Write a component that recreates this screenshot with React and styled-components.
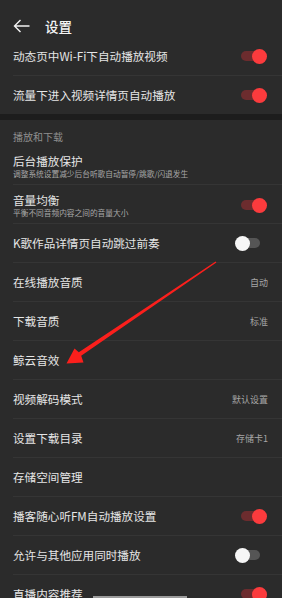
import React from 'react'
import styled, { createGlobalStyle } from 'styled-components'

const GlobalStyle = createGlobalStyle`
  html, body {
    margin: 0;
    padding: 0;
    background: #2b2b2b;
    overflow: hidden;
  }
  body {
    font-family: "Noto Sans CJK SC", "Noto Sans", sans-serif;
  }
`

const TOP = [
  { title: '动态页中Wi-Fi下自动播放视频', toggle: true },
  { title: '流量下进入视频详情页自动播放', toggle: true },
]

const PLAY = [
  { title: '后台播放保护', sub: '调整系统设置减少后台听歌自动暂停/跳歌/闪退发生' },
  { title: '音量均衡', sub: '平衡不同音频内容之间的音量大小', toggle: true },
  { title: 'K歌作品详情页自动跳过前奏', toggle: false },
  { title: '在线播放音质', value: '自动' },
  { title: '下载音质', value: '标准' },
  { title: '鲸云音效' },
  { title: '视频解码模式', value: '默认设置' },
  { title: '设置下载目录', value: '存储卡1' },
  { title: '存储空间管理' },
  { title: '播客随心听FM自动播放设置', toggle: true },
  { title: '允许与其他应用同时播放', toggle: false },
  { title: '直播内容推荐', toggle: true },
]

const Switch = ({ on }) => (
  <Track $on={on}>
    <Knob $on={on} />
  </Track>
)

const SettingRow = ({ item }) => (
  <Row $hasSub={!!item.sub}>
    <Texts>
      <Title>{item.title}</Title>
      {item.sub && <Sub>{item.sub}</Sub>}
    </Texts>
    {item.value && <Value>{item.value}</Value>}
    {item.toggle !== undefined && <Switch on={item.toggle} />}
  </Row>
)

const Group = ({ items }) => (
  <>
    {items.map((it, i) => (
      <React.Fragment key={it.title}>
        {i > 0 && <Divider />}
        <SettingRow item={it} />
      </React.Fragment>
    ))}
  </>
)

const App = () => (
  <Page>
    <GlobalStyle />
    <Header>
      <svg width="18" height="14" viewBox="0 0 18 14">
        <path d="M16.5 7H1.5M7.5 1L1.5 7L7.5 13" fill="none" stroke="#f2f2f2" strokeWidth="1.4" />
      </svg>
      <HeaderTitle>设置</HeaderTitle>
    </Header>
    <Group items={TOP} />
    <Band />
    <SectionTitle>播放和下载</SectionTitle>
    <Group items={PLAY} />
    <Arrow viewBox="0 0 282 598" width="282" height="598">
      <polygon
        points="215.6,261.4 78.8,352.2 74.5,348.5 66.5,363.5 83.5,362.5 81.2,355.8 216.4,262.6"
        fill="#fb1f1c"
      />
    </Arrow>
    <HomeBar />
  </Page>
)

const Page = styled.div`
  position: relative;
  width: 282px;
  height: 598px;
  overflow: hidden;
  background: #2b2b2b;
  color: #e6e6e6;
`
const Header = styled.div`
  display: flex;
  align-items: center;
  height: 37px;
  padding: 14px 0 0 13px;
  box-sizing: border-box;
  gap: 14px;
`
const HeaderTitle = styled.div`
  font-size: 13.5px;
  font-weight: 500;
  color: #f4f4f4;
  line-height: 20px;
`
const Row = styled.div`
  display: flex;
  align-items: ${p => (p.$hasSub ? 'flex-start' : 'center')};
  height: 38px;
  box-sizing: border-box;
  padding: ${p => (p.$hasSub ? '7px 22px 5px 13px' : '0 22px 0 13px')};
`
const Texts = styled.div`
  display: flex;
  flex-direction: column;
  flex: 1;
  min-width: 0;
`
const Title = styled.div`
  font-size: 11.6px;
  line-height: 16px;
  color: #e6e6e6;
  white-space: nowrap;
`
const Sub = styled.div`
  font-size: 7.7px;
  line-height: 9px;
  color: #a8a8a8;
  white-space: nowrap;
`
const Value = styled.div`
  font-size: 9px;
  color: #a6a6a6;
  margin-right: -8px;
`
const Divider = styled.div`
  height: 1px;
  margin-left: 13px;
  background: #353535;
`
const Band = styled.div`
  height: 6px;
  background: #1d1d1d;
`
const SectionTitle = styled.div`
  height: 26px;
  box-sizing: border-box;
  padding: 10px 0 0 13px;
  font-size: 10px;
  line-height: 14px;
  color: #8f8f8f;
`
const Track = styled.div`
  position: relative;
  align-self: center;
  width: 19px;
  height: 10px;
  border-radius: 5px;
  background: ${p => (p.$on ? '#6c2c2e' : '#555555')};
`
const Knob = styled.div`
  position: absolute;
  top: 50%;
  width: 15px;
  height: 15px;
  margin-top: -7.5px;
  border-radius: 50%;
  background: ${p => (p.$on ? '#fb3b3d' : '#f6f6f6')};
  ${p => (p.$on ? 'right: -7px;' : 'left: -6px;')}
`
const Arrow = styled.svg`
  position: absolute;
  left: 0;
  top: 0;
  pointer-events: none;
`
const HomeBar = styled.div`
  position: absolute;
  left: 93px;
  bottom: 0;
  width: 94px;
  height: 2px;
  background: #9c9c9c;
`

export default App
